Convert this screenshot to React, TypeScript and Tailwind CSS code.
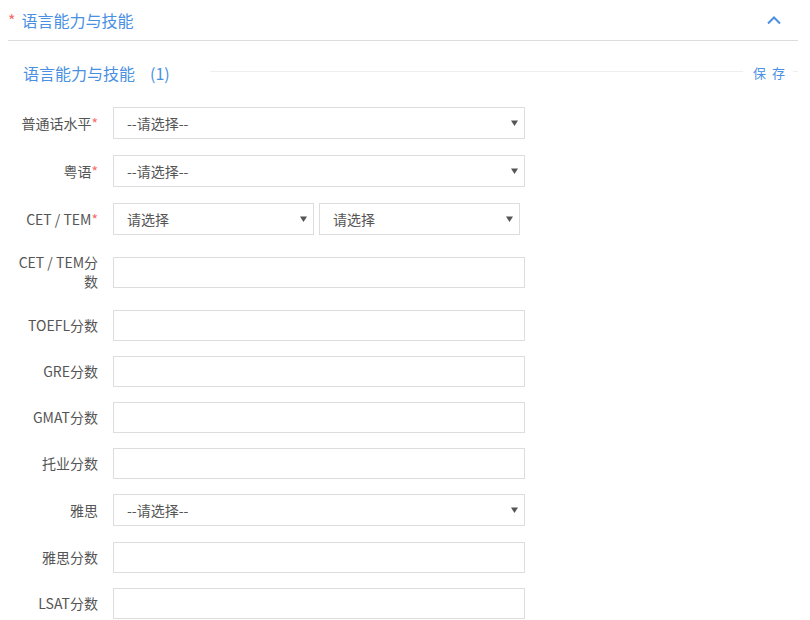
import React from "react";

const font = { fontFamily: '"Noto Sans CJK SC", "Noto Sans", sans-serif' };

const Caret = () => (
  <svg width="7" height="6" viewBox="0 0 7 6" className="shrink-0">
    <path d="M0 0.5 H7 L3.5 6 Z" fill="#555" />
  </svg>
);

interface SelectProps {
  text: string;
  className?: string;
}

const FakeSelect: React.FC<SelectProps> = ({ text, className }) => (
  <div
    className={`h-[32px] border border-[#ddd] bg-white flex items-center justify-between pl-[13px] pr-[6px] text-[14px] text-[#555] ${className ?? "w-[412px]"}`}
  >
    <span>{text}</span>
    <Caret />
  </div>
);

const FakeInput = () => <div className="w-[412px] h-[31px] border border-[#ddd] bg-white" />;

interface RowProps {
  label: React.ReactNode;
  required?: boolean;
  className?: string;
  children: React.ReactNode;
}

const Row: React.FC<RowProps> = ({ label, required, className, children }) => (
  <div className={`flex items-center ${className ?? ""}`}>
    <div className="w-[85px] ml-[5px] mr-[15px] text-right text-[14px] leading-[19px] text-[#555]">
      {label}
      {required && <span className="text-[#f56c6c]">*</span>}
    </div>
    {children}
  </div>
);

export default function App() {
  return (
    <div className="w-[810px] h-[620px] bg-white overflow-hidden" style={font}>
      <div className="ml-2 mr-[12px] h-[41px] border-b border-[#ddd] flex items-center justify-between">
        <div className="text-[16px] leading-[20px] text-[#4a90e2] flex items-center">
          <span className="text-[#f56c6c] mr-[6px]">*</span>
          <span>语言能力与技能</span>
        </div>
        <svg width="14" height="9" viewBox="0 0 14 9" className="mr-[17px]">
          <path d="M1 7.5 L7 1.5 L13 7.5" fill="none" stroke="#4a90e2" strokeWidth="2" />
        </svg>
      </div>

      <div className="ml-2 mr-[12px] mt-[20px] h-[24px] flex items-center">
        <div className="w-[202px] pl-[15px] text-[16px] leading-[20px] text-[#4a90e2] flex items-center">
          <span>语言能力与技能</span>
          <span className="ml-[15px]">(1)</span>
        </div>
        <div className="flex-1 h-px bg-[#eee] -mt-[3px]" />
        <div className="px-[10px] text-[13px] text-[#4a90e2] tracking-[6px] pr-[2px]">保存</div>
        <div className="w-[5px] h-px bg-[#eee] -mt-[3px]" />
      </div>

      <div className="mx-2 mt-[22px]">
        <Row label="普通话水平" required>
          <FakeSelect text="--请选择--" />
        </Row>
        <Row label="粤语" required className="mt-[16px]">
          <FakeSelect text="--请选择--" />
        </Row>
        <Row label="CET / TEM" required className="mt-[16px]">
          <div className="flex gap-[5px]">
            <FakeSelect text="请选择" className="w-[201px]" />
            <FakeSelect text="请选择" className="w-[201px]" />
          </div>
        </Row>
        <Row
          label={
            <>
              CET / TEM分
              <br />
              数
            </>
          }
          className="mt-[18px]"
        >
          <FakeInput />
        </Row>
        <Row label="TOEFL分数" className="mt-[19px]">
          <FakeInput />
        </Row>
        <Row label="GRE分数" className="mt-[15px]">
          <FakeInput />
        </Row>
        <Row label="GMAT分数" className="mt-[15px]">
          <FakeInput />
        </Row>
        <Row label="托业分数" className="mt-[15px]">
          <FakeInput />
        </Row>
        <Row label="雅思" className="mt-[15px]">
          <FakeSelect text="--请选择--" />
        </Row>
        <Row label="雅思分数" className="mt-[16px]">
          <FakeInput />
        </Row>
        <Row label="LSAT分数" className="mt-[15px]">
          <FakeInput />
        </Row>
      </div>
    </div>
  );
}
